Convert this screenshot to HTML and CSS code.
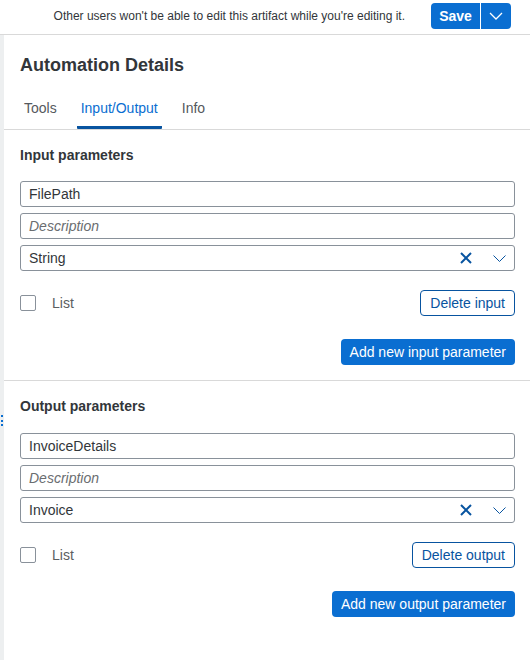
FILE: index.html
```html
<!DOCTYPE html>
<html>
<head>
<meta charset="utf-8">
<link rel="stylesheet" href="styles.css">
</head>
<body>
<div class="topbar">
  <span class="msg">Other users won't be able to edit this artifact while you're editing it.</span>
  <div class="split">
    <button class="save">Save</button>
    <button class="drop"><svg width="14" height="8" viewBox="0 0 14 8"><path d="M1 1l6 6 6-6" fill="none" stroke="#fff" stroke-width="1.3"/></svg></button>
  </div>
</div>
<div class="page">
  <div class="strip"><span class="grip"><i></i><i></i><i></i></span></div>
  <div class="main">
    <div class="header">
      <h1 class="title">Automation Details</h1>
    </div>
    <div class="tabbar">
      <div class="tab">Tools</div>
      <div class="tab active">Input/Output</div>
      <div class="tab">Info</div>
    </div>

    <div class="section divided">
      <div class="heading">Input parameters</div>
      <div class="fields">
        <div class="field">FilePath</div>
        <div class="field placeholder">Description</div>
        <div class="field select"><span>String</span>
          <span class="icons">
            <svg class="x" width="12" height="12" viewBox="0 0 12 12"><path d="M1 1l10 10M11 1L1 11" stroke="#0854a0" stroke-width="2"/></svg>
            <svg class="chev" width="13" height="7" viewBox="0 0 13 7"><path d="M0.5 0.5l6 6 6-6" fill="none" stroke="#0854a0" stroke-width="1"/></svg>
          </span>
        </div>
      </div>
      <div class="row">
        <label class="check"><span class="box"></span>List</label>
        <button class="ghost">Delete input</button>
      </div>
      <div class="addrow"><button class="primary">Add new input parameter</button></div>
    </div>

    <div class="section second">
      <div class="heading">Output parameters</div>
      <div class="fields">
        <div class="field">InvoiceDetails</div>
        <div class="field placeholder">Description</div>
        <div class="field select"><span>Invoice</span>
          <span class="icons">
            <svg class="x" width="12" height="12" viewBox="0 0 12 12"><path d="M1 1l10 10M11 1L1 11" stroke="#0854a0" stroke-width="2"/></svg>
            <svg class="chev" width="13" height="7" viewBox="0 0 13 7"><path d="M0.5 0.5l6 6 6-6" fill="none" stroke="#0854a0" stroke-width="1"/></svg>
          </span>
        </div>
      </div>
      <div class="row">
        <label class="check"><span class="box"></span>List</label>
        <button class="ghost">Delete output</button>
      </div>
      <div class="addrow"><button class="primary">Add new output parameter</button></div>
    </div>
  </div>
</div>
</body>
</html>
```

FILE: styles.css
```css
* { box-sizing: border-box; }
html, body { margin: 0; padding: 0; background: #fff; }
body {
  font-family: "Liberation Sans", Arial, sans-serif;
  color: #32363a;
  width: 530px;
  height: 660px;
  overflow: hidden;
}
button { font-family: inherit; cursor: pointer; }

.topbar {
  height: 35px;
  border-bottom: 1px solid #d9d9d9;
  display: flex;
  justify-content: flex-end;
  align-items: flex-start;
  padding: 3px 19px 0 0;
}
.msg {
  font-size: 12px;
  line-height: 26px;
  margin-right: 26px;
  color: #32363a;
}
.split { display: flex; gap: 1px; }
.split button {
  height: 26px;
  border: none;
  background: #0a6ed1;
  color: #fff;
  padding: 0;
}
.save {
  width: 49px;
  border-radius: 4px 0 0 4px;
  font-weight: bold;
  font-size: 14px;
}
.drop {
  width: 30px;
  border-radius: 0 4px 4px 0;
  display: flex;
  align-items: center;
  justify-content: center;
}

.page { display: flex; height: 625px; }
.strip {
  width: 4px;
  background: #edeff0;
  position: relative;
}
.grip {
  position: absolute;
  left: 1px;
  top: 380px;
  display: flex;
  flex-direction: column;
  gap: 2.5px;
}
.grip i { display: block; width: 2px; height: 2px; background: #0a6ed1; }

.main { flex: 1; }
.header { padding: 19px 15px 0 16px; }
.title {
  margin: 0;
  font-size: 18px;
  line-height: 22px;
  font-weight: bold;
}
.tabbar {
  margin-top: 22px;
  padding-left: 16px;
  border-bottom: 1px solid #d9d9d9;
  display: flex;
  gap: 16px;
}
.tab {
  font-size: 14px;
  line-height: 20px;
  padding: 0 4px 8px;
  border-bottom: 3px solid transparent;
  color: #55595d;
}
.tab.active {
  color: #0a6ed1;
  border-bottom-color: #0854a0;
  border-radius: 0 0 1px 1px;
}

.section { padding: 15px 15px 15px 16px; }
.section.divided { border-bottom: 1px solid #d9d9d9; }
.heading {
  font-size: 14px;
  font-weight: bold;
  line-height: 20px;
  margin-bottom: 16px;
}
.section.second .heading { margin-bottom: 17px; }
.fields { display: flex; flex-direction: column; gap: 6px; }
.field {
  height: 26px;
  border: 1px solid #89919a;
  border-radius: 3px;
  padding: 0 8px;
  font-size: 14px;
  line-height: 24px;
  color: #32363a;
  display: flex;
  align-items: center;
}
.field.placeholder { font-style: italic; color: #6a6d70; }
.field.select { justify-content: space-between; padding-right: 8px; }
.icons { display: flex; align-items: center; gap: 21px; }
.icons .chev { margin-top: 1px; }

.row {
  margin-top: 19px;
  height: 26px;
  display: flex;
  align-items: center;
  justify-content: space-between;
}
.check {
  display: flex;
  align-items: center;
  font-size: 14px;
  color: #5b5e61;
}
.box {
  width: 16px;
  height: 16px;
  border: 1px solid #89919a;
  border-radius: 2px;
  margin-right: 16px;
}
.ghost {
  height: 26px;
  border: 1px solid #0854a0;
  border-radius: 4px;
  background: #fff;
  color: #0854a0;
  font-size: 14px;
  padding: 0 9px;
}
.addrow {
  margin-top: 23px;
  display: flex;
  justify-content: flex-end;
}
.primary {
  height: 26px;
  border: none;
  border-radius: 4px;
  background: #0a6ed1;
  color: #fff;
  font-size: 14px;
  padding: 0 9px;
}
```
